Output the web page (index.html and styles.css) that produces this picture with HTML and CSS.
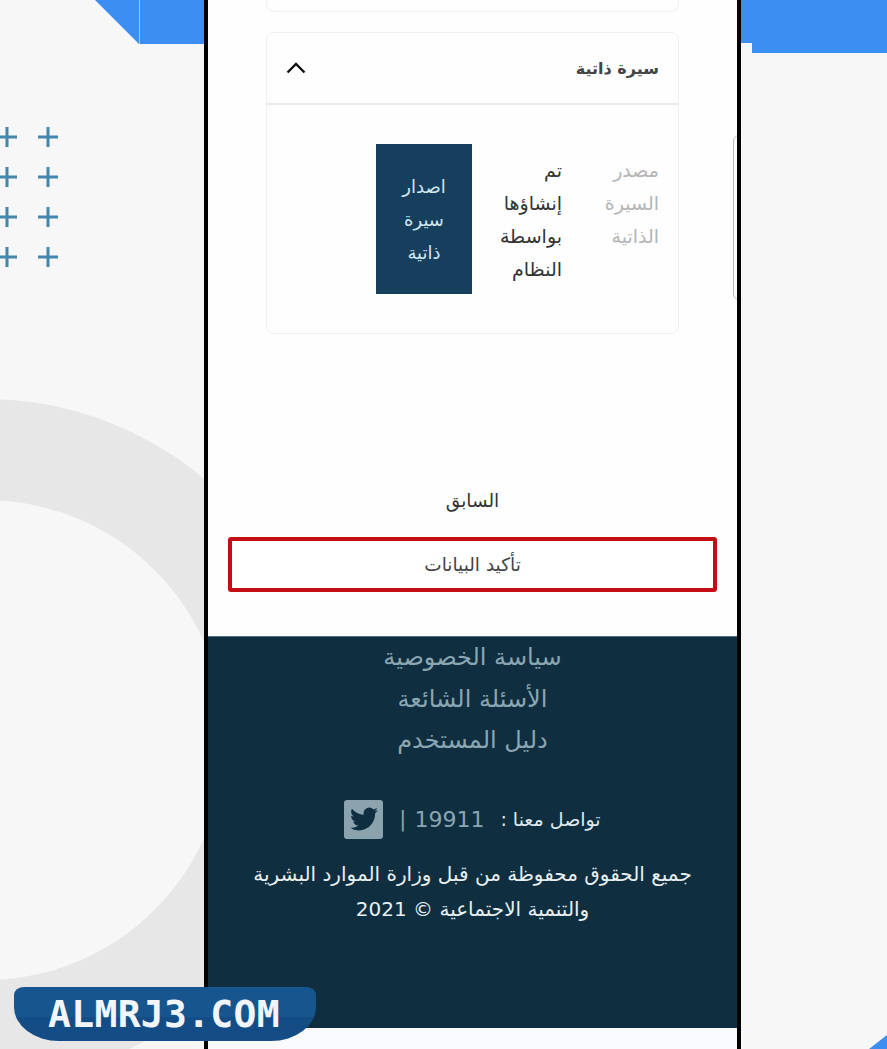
FILE: index.html
```html
<!DOCTYPE html>
<html lang="ar">

<head>
	<meta charset="utf-8">
	<title>سيرة ذاتية</title>
	<link rel="stylesheet" href="styles.css">
</head>

<body>
	<!-- background decoration -->
	<div class="ring"></div>
	<div class="blue blue-left"><span class="blue-line"></span></div>
	<div class="blue blue-right"></div>
	<div class="blue blue-corner"></div>
	<svg class="plus-grid" width="70" height="140" viewBox="0 0 70 140">
		<path d="M7 0V20M-3 10H17M48 0V20M38 10H58M7 40V60M-3 50H17M48 40V60M38 50H58M7 80V100M-3 90H17M48 80V100M38 90H58M7 120V140M-3 130H17M48 120V140M38 130H58" />
	</svg>

	<div class="phone" dir="rtl">
		<div class="content">
			<div class="card-stub"></div>

			<div class="card">
				<div class="card-header">
					<span class="card-title">سيرة ذاتية</span>
					<svg class="chevron" width="20" height="12" viewBox="0 0 20 12">
						<path d="M1.5 10.5L10 2L18.5 10.5" />
					</svg>
				</div>
				<div class="card-body">
					<div class="label-col">مصدر<br>السيرة<br>الذاتية</div>
					<div class="value-col">تم<br>إنشاؤها<br>بواسطة<br>النظام</div>
					<a class="cv-button">اصدار<br>سيرة<br>ذاتية</a>
				</div>
			</div>

			<div class="actions">
				<a class="back-link">السابق</a>
				<a class="confirm-button">تأكيد البيانات</a>
			</div>
		</div>

		<div class="next-card"></div>

		<div class="footer">
			<ul class="footer-links">
				<li>سياسة الخصوصية</li>
				<li>الأسئلة الشائعة</li>
				<li>دليل المستخدم</li>
			</ul>
			<div class="contact">
				<span class="contact-label">تواصل معنا :</span>
				<span class="contact-number">19911</span>
				<span class="contact-sep">|</span>
				<span class="twitter">
					<svg width="28" height="28" viewBox="0 0 24 24">
						<path d="M23.953 4.57a10 10 0 01-2.825.775 4.958 4.958 0 002.163-2.723c-.951.555-2.005.959-3.127 1.184a4.92 4.92 0 00-8.384 4.482C7.69 8.095 4.067 6.13 1.64 3.162a4.822 4.822 0 00-.666 2.475c0 1.71.87 3.213 2.188 4.096a4.904 4.904 0 01-2.228-.616v.06a4.923 4.923 0 003.946 4.827 4.996 4.996 0 01-2.212.085 4.936 4.936 0 004.604 3.417 9.867 9.867 0 01-6.102 2.105c-.39 0-.779-.023-1.17-.067a13.995 13.995 0 007.557 2.209c9.053 0 13.998-7.496 13.998-13.985 0-.21 0-.42-.015-.63A9.935 9.935 0 0024 4.59z" />
					</svg>
				</span>
			</div>
			<p class="copyright">جميع الحقوق محفوظة من قبل وزارة الموارد البشرية<br>والتنمية الاجتماعية © 2021</p>
		</div>
	</div>

	<div class="watermark">ALMRJ3.COM</div>
</body>

</html>
```

FILE: styles.css
```css
body {
	font-family: "DejaVu Sans", sans-serif;
	background-color: #f7f7f7;
	color: #333;
	margin: 0;
	padding: 0;
	height: 1049px;
	overflow: hidden;
	position: relative;
}

/* background shapes */
.ring {
	position: absolute;
	left: -356px;
	top: 399px;
	width: 682px;
	height: 682px;
	box-sizing: border-box;
	border: 101px solid #e7e7e7;
	border-radius: 50%;
}

.blue {
	position: absolute;
	background-color: #3d8ef2;
}

.blue-left {
	left: 95px;
	top: 0;
	width: 109px;
	height: 44px;
	clip-path: polygon(0 0, 100% 0, 100% 100%, 44px 100%);
}

.blue-line {
	position: absolute;
	left: 44px;
	top: 0;
	width: 1px;
	height: 44px;
	background-color: #9cc8f5;
}

.blue-right {
	left: 741px;
	top: 0;
	width: 146px;
	height: 53px;
	clip-path: polygon(0 0, 100% 0, 100% 100%, 11px 100%, 11px 43px, 0 43px);
}

.blue-corner {
	left: 869px;
	top: 1035px;
	width: 18px;
	height: 14px;
	clip-path: polygon(100% 0, 100% 100%, 0 100%);
}

.plus-grid {
	position: absolute;
	left: 0;
	top: 127px;
	overflow: visible;
}

.plus-grid path {
	stroke: #4285ad;
	stroke-width: 3;
	fill: none;
}

/* phone */
.phone {
	position: relative;
	box-sizing: border-box;
	width: 537px;
	height: 1049px;
	margin-left: 204px;
	border-left: 4px solid #000;
	border-right: 4px solid #000;
	background-color: #f9fafd;
	overflow: hidden;
}

.content {
	height: 636px;
	background-color: #fefefe;
	padding: 0 58px;
	box-sizing: border-box;
}

.card-stub {
	height: 12px;
	box-sizing: border-box;
	border: 1px solid #efefef;
	border-top: none;
	border-radius: 0 0 8px 8px;
	margin-bottom: 20px;
}

.card {
	border: 1px solid #f0f0f0;
	border-radius: 8px;
	height: 302px;
	box-sizing: border-box;
}

.card-header {
	height: 70px;
	display: flex;
	align-items: center;
	justify-content: space-between;
	padding: 0 19px;
	border-bottom: 2px solid #e9e9e9;
}

.card-title {
	font-size: 16px;
	font-weight: bold;
	color: #444;
}

.chevron path {
	stroke: #111;
	stroke-width: 2.4;
	fill: none;
}

.card-body {
	display: flex;
	padding: 39px 19px 0;
	font-size: 19px;
	line-height: 33px;
}

.label-col {
	width: 97px;
	padding-top: 10px;
	color: #b5b5b5;
}

.value-col {
	width: 90px;
	padding-top: 10px;
	color: #333;
}

.cv-button {
	width: 96px;
	height: 150px;
	display: flex;
	align-items: center;
	justify-content: center;
	text-align: center;
	font-size: 18px;
	background-color: #153f5c;
	color: #d4e6ee;
}

.actions {
	display: flex;
	flex-direction: column;
	align-items: center;
	margin: 0 -38px;
	padding-top: 149px;
}

.back-link {
	font-size: 18.5px;
	line-height: 36px;
	color: #333;
}

.confirm-button {
	box-sizing: border-box;
	width: 489px;
	height: 55px;
	margin-top: 18px;
	display: flex;
	align-items: center;
	justify-content: center;
	font-size: 18.5px;
	color: #444;
	background-color: #fff;
	border: 4px solid #c50d14;
	border-radius: 3px;
}

.next-card {
	position: absolute;
	right: -10px;
	top: 135px;
	width: 14px;
	height: 165px;
	box-sizing: border-box;
	border: 1px solid #bbb;
	border-radius: 6px;
}

/* footer */
.footer {
	height: 392px;
	box-sizing: border-box;
	background-color: #0f2f40;
	border-top: 1px solid #55707c;
	text-align: center;
}

.footer-links {
	list-style: none;
	margin: 0;
	padding: 0;
	font-size: 24px;
	line-height: 41.5px;
	color: #8ba6b3;
}

.contact {
	display: flex;
	align-items: center;
	justify-content: center;
	gap: 8px;
	margin-top: 38px;
	height: 39px;
}

.contact-label {
	font-size: 19px;
	color: #dfe9ee;
}

.contact-number {
	font-size: 22px;
	color: #8ba6b3;
	margin-right: 8px;
}

.contact-sep {
	font-size: 21px;
	color: #8ba6b3;
}

.twitter {
	width: 39px;
	height: 39px;
	display: flex;
	align-items: center;
	justify-content: center;
	background-color: #8ba3ae;
	border-radius: 3px;
	margin-right: 8px;
}

.twitter path {
	fill: #0f2f40;
}

.copyright {
	margin: 18px 0 0;
	font-size: 20px;
	line-height: 35px;
	color: #e8eef1;
}

/* site watermark */
.watermark {
	position: absolute;
	left: 14px;
	top: 987px;
	width: 302px;
	height: 54px;
	box-sizing: border-box;
	padding-right: 2px;
	display: flex;
	align-items: center;
	justify-content: center;
	font-family: "DejaVu Sans Mono", monospace;
	font-size: 38px;
	font-weight: bold;
	letter-spacing: 0.3px;
	color: #f2f6fa;
	background: linear-gradient(#17558f 55%, #144d86 55%);
	border-radius: 10px 10px 45px 45px / 8px 8px 34px 34px;
}
```
